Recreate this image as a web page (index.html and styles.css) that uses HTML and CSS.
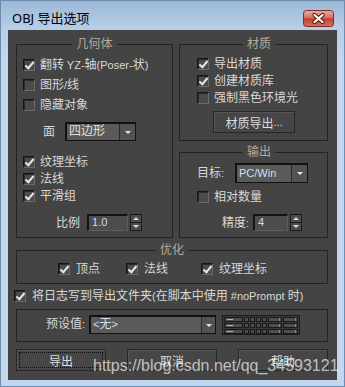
FILE: index.html
```html
<!DOCTYPE html>
<html lang="zh-CN">
<head>
<meta charset="utf-8">
<title>OBJ 导出选项</title>
<link rel="stylesheet" href="styles.css">
</head>
<body>
<div class="window">
  <div class="titlebar">
    <span class="title">OBJ 导出选项</span>
    <span class="close">
      <svg width="31" height="17" viewBox="0 0 31 17">
        <defs>
          <linearGradient id="cg" x1="0" y1="0" x2="0" y2="1">
            <stop offset="0" stop-color="#eab0a4"/>
            <stop offset="0.45" stop-color="#d66c5d"/>
            <stop offset="0.52" stop-color="#c3402f"/>
            <stop offset="1" stop-color="#d8715c"/>
          </linearGradient>
        </defs>
        <rect x="0.5" y="0.5" width="30" height="16" rx="3" fill="url(#cg)" stroke="#7e2b22"/>
        <path d="M11.5 5 L19.5 12 M19.5 5 L11.5 12" stroke="#4f1b15" stroke-width="4.2" stroke-linecap="round"/>
        <path d="M11.5 5 L19.5 12 M19.5 5 L11.5 12" stroke="#ffffff" stroke-width="2.2" stroke-linecap="round"/>
      </svg>
    </span>
  </div>
  <div class="client">
    <div class="top">
      <fieldset class="group geo">
        <legend>几何体</legend>
        <div class="rows r20">
          <label class="check"><span class="box on"></span>翻转<span class="lat"> YZ-</span>轴<span class="lat">(Poser-</span>状<span class="lat">)</span></label>
          <label class="check"><span class="box"></span>图形<span class="lat">/</span>线</label>
          <label class="check"><span class="box"></span>隐藏对象</label>
        </div>
        <div class="field face">
          <span class="lbl">面</span>
          <div class="combo c-face"><span class="val">四边形</span><span class="arrow"></span></div>
        </div>
        <div class="rows r17 geo2">
          <label class="check"><span class="box on"></span>纹理坐标</label>
          <label class="check"><span class="box on"></span>法线</label>
          <label class="check"><span class="box on"></span>平滑组</label>
        </div>
        <div class="field scale">
          <span class="lbl">比例</span>
          <div class="spin">
            <span class="input i-scale lat">1.0</span>
            <span class="spinbtns"><i class="up"></i><i class="dn"></i></span>
          </div>
        </div>
      </fieldset>
      <div class="rightcol">
        <fieldset class="group mat">
          <legend>材质</legend>
          <div class="rows r17">
            <label class="check"><span class="box on"></span>导出材质</label>
            <label class="check"><span class="box on"></span>创建材质库</label>
            <label class="check"><span class="box"></span>强制黑色环境光</label>
          </div>
          <div class="btn b-mat">材质导出<span class="lat">...</span></div>
        </fieldset>
        <fieldset class="group out">
          <legend>输出</legend>
          <div class="field target">
            <span class="lbl">目标<span class="lat">:</span></span>
            <div class="combo c-target"><span class="val lat">PC/Win</span><span class="arrow"></span></div>
          </div>
          <div class="rows r17 out-rows">
            <label class="check"><span class="box"></span>相对数量</label>
          </div>
          <div class="field prec">
            <span class="lbl">精度<span class="lat">:</span></span>
            <div class="spin">
              <span class="input i-prec lat">4</span>
              <span class="spinbtns"><i class="up"></i><i class="dn"></i></span>
            </div>
          </div>
        </fieldset>
      </div>
    </div>
    <fieldset class="group opt">
      <legend>优化</legend>
      <div class="optrow">
        <label class="check"><span class="box on"></span>顶点</label>
        <label class="check"><span class="box on"></span>法线</label>
        <label class="check"><span class="box on"></span>纹理坐标</label>
      </div>
    </fieldset>
    <label class="check logrow"><span class="box on"></span>将日志写到导出文件夹<span class="lat">(</span>在脚本中使用<span class="lat"> #noPrompt </span>时<span class="lat">)</span></label>
    <div class="preset">
      <span class="lbl">预设值<span class="lat">:</span></span>
      <div class="combo c-preset"><span class="val"><span class="lat">&lt;</span>无<span class="lat">&gt;</span></span><span class="arrow"></span></div>
      <svg class="preset-icon" width="78" height="20" viewBox="0 0 78 20">
        <rect x="0.5" y="0.5" width="77" height="19" fill="#3b3b3b" stroke="#1c1c1c"/>
        <g fill="#4e4e4e" stroke="#1a1a1a">
          <rect x="2.5" y="2.5" width="18" height="4"/>
          <rect x="2.5" y="8.5" width="18" height="4"/>
          <rect x="2.5" y="14.5" width="18" height="4"/>
          <rect x="22.5" y="2.5" width="4" height="4"/><rect x="28.5" y="2.5" width="4" height="4"/><rect x="34.5" y="2.5" width="4" height="4"/><rect x="40.5" y="2.5" width="4" height="4"/>
          <rect x="22.5" y="8.5" width="4" height="4"/><rect x="28.5" y="8.5" width="4" height="4"/><rect x="34.5" y="8.5" width="4" height="4"/><rect x="40.5" y="8.5" width="4" height="4"/>
          <rect x="22.5" y="14.5" width="4" height="4"/><rect x="28.5" y="14.5" width="4" height="4"/><rect x="34.5" y="14.5" width="4" height="4"/><rect x="40.5" y="14.5" width="4" height="4"/>
          <rect x="46.5" y="2.5" width="13" height="4"/><rect x="61.5" y="2.5" width="14" height="4"/>
          <rect x="46.5" y="8.5" width="13" height="4"/><rect x="61.5" y="8.5" width="14" height="4"/>
          <rect x="46.5" y="14.5" width="13" height="4"/><rect x="61.5" y="14.5" width="14" height="4"/>
        </g>
        <g stroke="#b8b8b8" stroke-width="1">
          <path d="M5 4.5 H11 M5 10.5 H11 M5 16.5 H11"/>
          <path d="M57.5 3 V6 M57.5 9 V12 M57.5 15 V18 M73.5 3 V6 M73.5 9 V12 M73.5 15 V18" stroke="#8a8a8a"/>
        </g>
      </svg>
    </div>
    <div class="buttons">
      <div class="btn focus">导出</div>
      <div class="btn">取消</div>
      <div class="btn">帮助</div>
    </div>
  </div>
</div>
<div class="watermark">https://blog.csdn.net/qq_34593121</div>
</body>
</html>
```
FILE: styles.css
```css
* { box-sizing: border-box; }
html, body { margin: 0; padding: 0; }
body {
  width: 345px;
  height: 387px;
  overflow: hidden;
  position: relative;
  font-family: "Liberation Sans", "Noto Sans CJK SC", sans-serif;
  font-size: 12px;
  background: #c3d7ee;
}
.lat { font-size: 11px; }
.window {
  width: 345px;
  height: 387px;
  border: 1px solid #6f8bab;
  background: linear-gradient(to bottom, #9cb7d7 0, #b6cde7 26px, #c3d7ee 60px, #c3d7ee 100%);
  padding: 0 7px 6px 7px;
  display: flex;
  flex-direction: column;
}
.titlebar {
  height: 29px;
  flex: none;
  display: flex;
  justify-content: space-between;
  align-items: flex-start;
  padding: 9px 3px 0 4px;
}
.title {
  font-family: "Noto Sans", "Noto Sans CJK SC", sans-serif;
  font-size: 13px;
  line-height: 16px;
  color: #000;
}
.close { display: block; width: 31px; height: 17px; }
.close svg { display: block; }

.client {
  background: #444444;
  height: 350px;
  flex: none;
  padding: 7px 9px 9px 8px;
  display: flex;
  flex-direction: column;
  color: #d8d8d8;
}
.top {
  display: grid;
  grid-template-columns: 157px 149px;
  column-gap: 6px;
  height: 201px;
  flex: none;
}
.rightcol {
  display: flex;
  flex-direction: column;
  gap: 4px;
}
.group {
  margin: 0;
  min-width: 0;
  border: 1px solid #232323;
  padding: 3px 6px 0 6px;
}
legend {
  margin: 0 auto;
  padding: 0 4px;
  height: 15px;
  line-height: 15px;
  font-size: 12px;
  color: #b3aa9d;
}
.rows { display: flex; flex-direction: column; }
.check {
  display: flex;
  align-items: center;
  white-space: nowrap;
  line-height: 16px;
}
.check .lat { white-space: pre; }
.r20 .check { height: 20px; }
.r17 .check { height: 17px; }
.box {
  position: relative;
  flex: none;
  width: 12px;
  height: 12px;
  margin-right: 5px;
  border: 1px solid;
  border-color: #151515 #6a6a6a #6a6a6a #151515;
  background: #4b4b4b;
  box-shadow: inset 1px 1px 0 #2b2b2b;
}
.box.on::after {
  content: "";
  position: absolute;
  left: 3px;
  top: 0px;
  width: 3px;
  height: 7px;
  border: solid #e8e8e8;
  border-width: 0 2px 2px 0;
  transform: rotate(40deg);
}

.field { display: flex; align-items: center; }
.lbl { white-space: nowrap; line-height: 16px; }
.face { margin-top: 7px; padding-left: 20px; }
.face .lbl { margin-right: 10px; }
.geo2 { margin-top: 12px; }
.scale { margin-top: 10px; padding-left: 33px; }
.scale .lbl { margin-right: 7px; }

.combo {
  display: flex;
  height: 19px;
  border: 1px solid #121212;
  border-top-width: 2px;
  border-left-width: 2px;
  background: #5a5a5a;
  color: #e2e2e2;
}
.combo .val {
  flex: 1;
  padding-left: 2px;
  line-height: 15px;
  white-space: nowrap;
  overflow: hidden;
}
.combo .arrow {
  flex: none;
  width: 16px;
  border-left: 1px solid #2a2a2a;
  background: #525252;
  display: flex;
  align-items: center;
  justify-content: center;
}
.combo .arrow::after {
  content: "";
  border-top: 3px solid #e6e6e6;
  border-left: 3px solid transparent;
  border-right: 3px solid transparent;
}
.c-face { width: 71px; }
.c-target { width: 73px; height: 20px; color: #cfdff2; }
.c-target .val { line-height: 16px; }
.c-preset { width: 127px; color: #cfdff2; }
.c-preset .arrow { width: 14px; }

.spin { display: flex; height: 17px; gap: 2px; }
.input {
  display: block;
  height: 17px;
  border: 1px solid #6a6a6a;
  border-color: #141414 #5e5e5e #5e5e5e #141414;
  border-top-width: 2px;
  border-left-width: 2px;
  background: #4d4d4d;
  color: #c8daf2;
  padding-left: 3px;
  line-height: 13px;
}
.i-scale { width: 41px; }
.i-prec { width: 35px; }
.spinbtns {
  display: flex;
  flex-direction: column;
  width: 12px;
  height: 17px;
  border: 1px solid #1a1a1a;
  background: #4a4a4a;
}
.spinbtns i {
  flex: 1;
  display: flex;
  align-items: center;
  justify-content: center;
}
.spinbtns i.up { border-bottom: 1px solid #1a1a1a; }
.spinbtns i.up::after {
  content: "";
  border-bottom: 3px solid #dcdcdc;
  border-left: 3px solid transparent;
  border-right: 3px solid transparent;
}
.spinbtns i.dn::after {
  content: "";
  border-top: 3px solid #dcdcdc;
  border-left: 3px solid transparent;
  border-right: 3px solid transparent;
}

.mat { height: 104px; flex: none; padding-left: 17px; }
.btn {
  display: flex;
  align-items: center;
  justify-content: center;
  height: 22px;
  border: 1px solid #262626;
  background: #464646;
  box-shadow: inset 1px 1px 0 #555555;
  color: #dcdcdc;
  white-space: nowrap;
  position: relative;
}
.b-mat { width: 82px; margin: 5px 0 0 16px; }

.out { flex: 1; padding-left: 17px; }
.target .lbl { width: 38px; }
.out-rows { margin-top: 5px; }
.prec { margin-top: 9px; padding-left: 25px; }
.prec .lbl { margin-right: 4px; }

.opt { height: 41px; flex: none; margin-top: 5px; padding: 2px 0 0 0; }
.optrow {
  display: grid;
  grid-template-columns: 68px 75px auto;
  padding-left: 41px;
}
.optrow .check { height: 17px; }
.optrow .box { margin-right: 6px; }

.logrow { height: 16px; margin: 4px 0 0 -2px; flex: none; }
.logrow .box { margin-right: 6px; }

.preset {
  flex: none;
  height: 33px;
  margin-top: 5px;
  border: 1px solid #232323;
  display: flex;
  align-items: flex-start;
  padding: 5px 0 0 29px;
}
.preset .lbl { margin-right: 4px; line-height: 19px; }
.preset-icon { display: block; margin-left: 6px; }

.buttons {
  flex: none;
  margin-top: 7px;
  display: flex;
  justify-content: space-between;
}
.buttons .btn { width: 90px; }
.btn.focus::after {
  content: "";
  position: absolute;
  left: 2px; top: 2px; right: 2px; bottom: 2px;
  border: 1px dotted #0c0c0c;
}

.watermark {
  position: absolute;
  left: 93px;
  top: 357px;
  font-family: "Liberation Sans", sans-serif;
  font-size: 16px;
  line-height: 18px;
  color: rgba(255, 255, 255, 0.68);
  white-space: nowrap;
}
```
